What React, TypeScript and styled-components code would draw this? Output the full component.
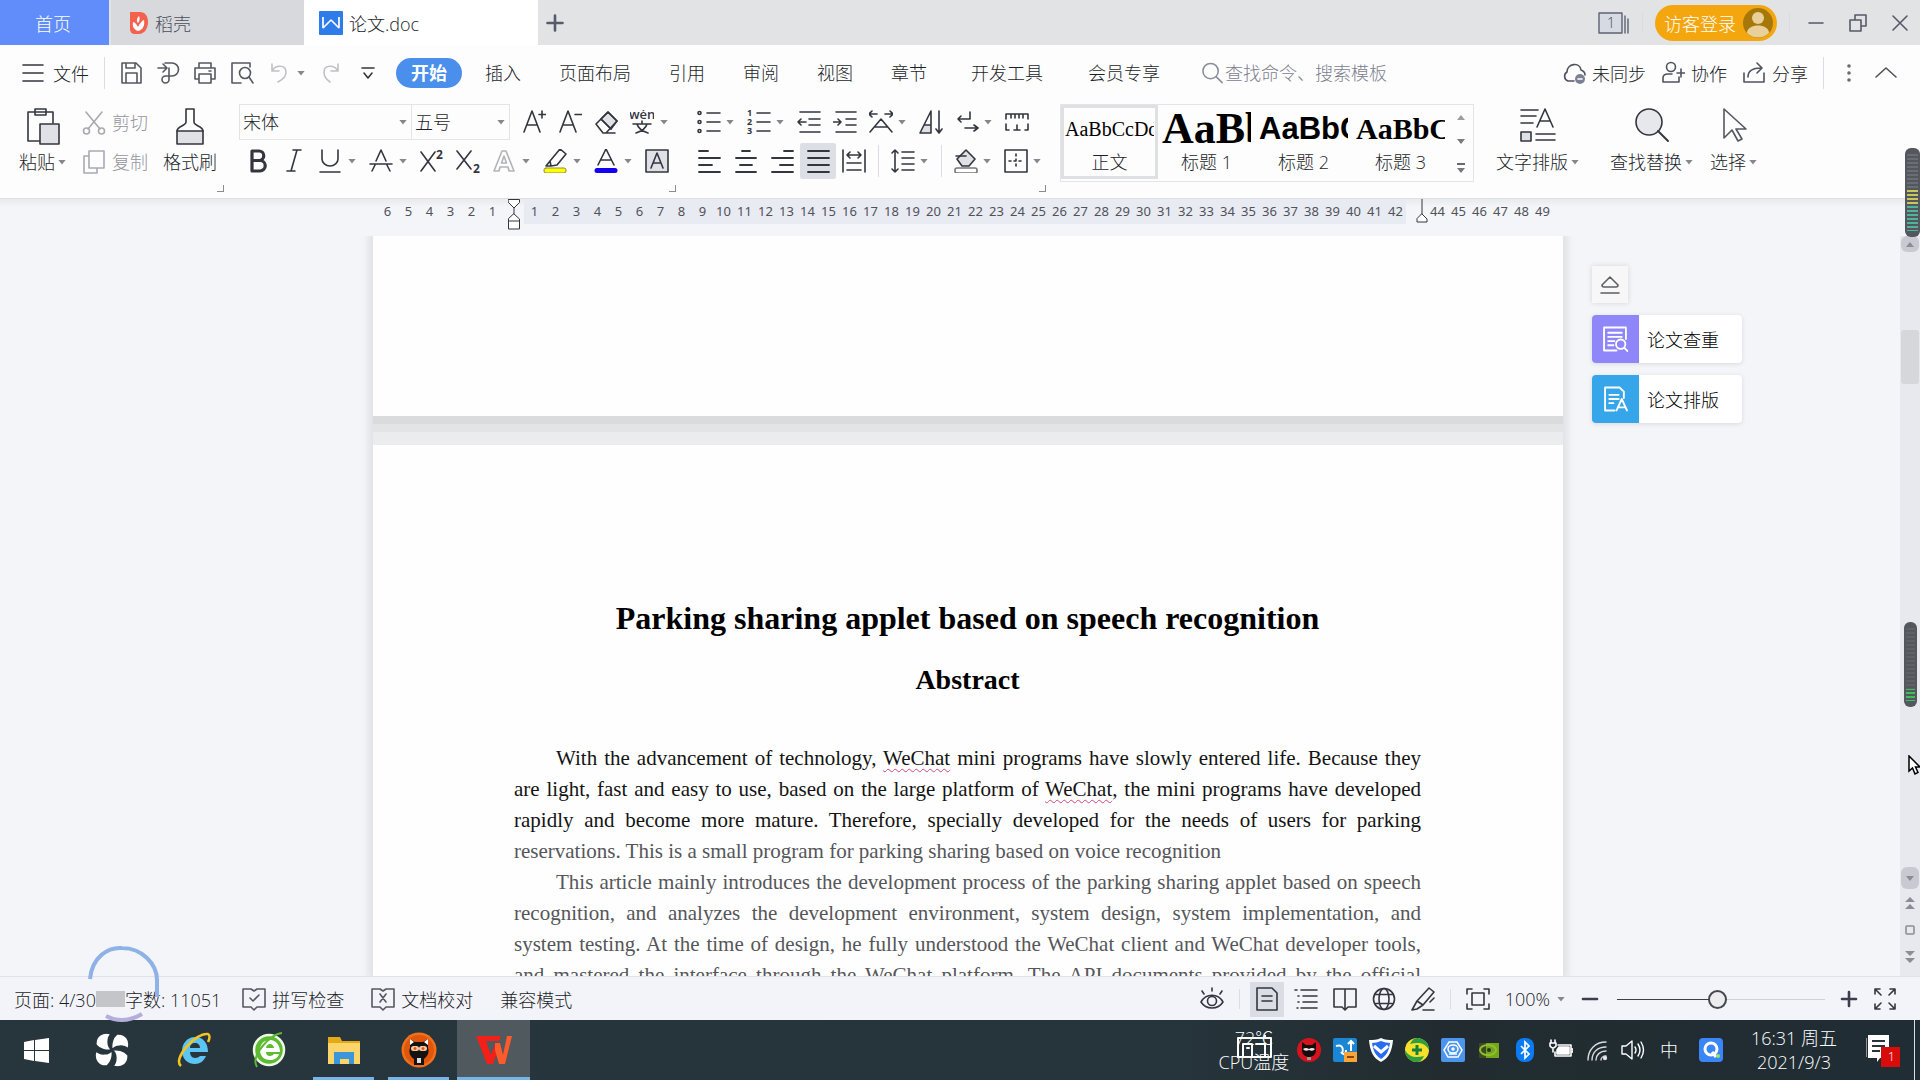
import React from "react";
import styled, { createGlobalStyle, css } from "styled-components";

const Global = createGlobalStyle`
  * { box-sizing: border-box; }
  body { margin: 0; font-family: "Open Sans", "Noto Sans CJK SC", sans-serif; font-size: 18px; font-weight: 300; color: #1c1e28; }
  button, input, select { font: inherit; color: inherit; border: 0; background: none; padding: 0; margin: 0; outline: none; }
  button { white-space: nowrap; }
  svg { display: block; flex: none; }
`;

const Shell = styled.div`
  display: flex;
  flex-direction: column;
  height: 100vh;
  overflow: hidden;
  background: #f3f5f8;
`;

/* ---------- shared ---------- */
const Row = styled.div<{ $gap?: number }>`
  display: flex;
  align-items: center;
  gap: ${(p) => p.$gap ?? 12}px;
`;
const Divider = styled.span<{ $h?: number }>`
  flex: none;
  width: 1px;
  height: ${(p) => p.$h ?? 32}px;
  background: #dcdde2;
`;
const CaretMark = styled.span`
  flex: none;
  width: 10px;
  height: 5px;
  background: #85878d;
  clip-path: polygon(10% 0, 90% 0, 50% 100%);
`;

type IconProps = { size?: number; w?: number; h?: number; box?: string; sw?: number; color?: string; children: React.ReactNode };
const Icon = ({ size = 24, w, h, box = "0 0 24 24", sw = 1.6, color = "#34363f", children }: IconProps) => (
  <svg width={w ?? size} height={h ?? size} viewBox={box} fill="none" stroke={color} strokeWidth={sw} strokeLinecap="round" strokeLinejoin="round" aria-hidden="true">
    {children}
  </svg>
);

/* ---------- title bar ---------- */
const TitleBar = styled.header`
  display: flex;
  align-items: stretch;
  height: 45px;
  flex: none;
  background: #e2e3e5;
`;
const HomeTab = styled.button`
  width: 109px;
  padding-right: 3px;
  background: #608dfa;
  color: #fff;
`;
const FileTab = styled.button<{ $active?: boolean }>`
  display: flex;
  align-items: center;
  gap: 6px;
  width: ${(p) => (p.$active ? 234 : 193)}px;
  margin-left: ${(p) => (p.$active ? 0 : 2)}px;
  padding-left: ${(p) => (p.$active ? 15 : 18)}px;
  background: ${(p) => (p.$active ? "#fff" : "#d8d9dc")};
  color: ${(p) => (p.$active ? "#22242c" : "#4c4f5c")};
`;
const NewTab = styled.button`
  width: 34px;
  display: grid;
  place-items: center;
`;
const WindowSide = styled.div`
  display: flex;
  align-items: center;
  gap: 12px;
  margin-left: auto;
  padding-right: 11px;
`;
const Login = styled.button`
  display: flex;
  align-items: center;
  gap: 7px;
  height: 36px;
  padding: 0 4px 0 9px;
  border-radius: 18px;
  background: #f4a60f;
  color: #fff;
`;
const WinButtons = styled.div`
  display: flex;
  gap: 24px;
  margin-left: 5px;
`;

/* ---------- menu row ---------- */
const MenuBar = styled.nav`
  display: flex;
  align-items: center;
  height: 56px;
  flex: none;
  padding: 0 22px;
  background: #fdfdfe;
`;
const FileButton = styled.button`
  display: flex;
  align-items: center;
  gap: 9px;
  margin-right: 15px;
`;
const QuickTools = styled.div`
  display: flex;
  align-items: center;
  gap: 13px;
  margin: 0 14px;
`;
const Tabs = styled.div`
  display: flex;
  align-items: center;
  gap: 38px;
  margin-left: 17px;
`;
const WideTabs = styled(Tabs)`
  gap: 45px;
  margin-left: 44px;
`;
const Tab = styled.button<{ $on?: boolean }>`
  line-height: 30px;
  ${(p) => p.$on && css`
    margin: 0 -15px;
    padding: 0 15px;
    border-radius: 15px;
    background: #4a8fec;
    color: #fff;
    font-weight: 700;
  `}
`;
const Search = styled.label`
  display: flex;
  align-items: center;
  gap: 1px;
  margin-left: 41px;
  input { width: 176px; color: #7c7f8e; }
  input::placeholder { color: #7c7f8e; opacity: 1; }
`;
const MenuSide = styled.div`
  display: flex;
  align-items: center;
  gap: 15px;
  margin-left: auto;
`;
const SideAction = styled.button`
  display: flex;
  align-items: center;
  gap: 6px;
`;

/* ---------- ribbon ---------- */
const Ribbon = styled.section`
  display: flex;
  align-items: flex-start;
  height: 98px;
  flex: none;
  padding: 3px 0 0 19px;
  background: #fdfdfe;
  border-bottom: 1px solid #dfe0e3;
`;
const BigButton = styled.button`
  display: flex;
  flex-direction: column;
  align-items: center;
  gap: 3px;
  padding-top: 3px;
`;
const BigLabel = styled.span`
  display: flex;
  align-items: center;
  gap: 2px;
  line-height: 28px;
`;
const ClipColumn = styled.div`
  display: flex;
  flex-direction: column;
  gap: 11px;
  margin: 5px 15px 0 15px;
`;
const ClipButton = styled.button`
  display: flex;
  align-items: center;
  gap: 6px;
  line-height: 28px;
  color: #95969e;
`;
const Corner = styled.span<{ $pull?: number }>`
  align-self: flex-end;
  width: 7px;
  height: 7px;
  margin: 0 0 6px -${(p) => p.$pull ?? 0}px;
  border: solid #8a8c92;
  border-width: 0 1px 1px 0;
`;
const ToolGroup = styled.div<{ $left?: number }>`
  display: flex;
  flex-direction: column;
  gap: 3px;
  margin-left: ${(p) => p.$left ?? 0}px;
`;
const ToolRow = styled(Row)<{ $pad?: number; $caretGap?: number }>`
  height: 36px;
  padding-left: ${(p) => p.$pad ?? 0}px;
  & > button { gap: ${(p) => p.$caretGap ?? 5}px; }
`;
const Combo = styled.label<{ $w: number }>`
  display: flex;
  align-items: center;
  width: ${(p) => p.$w}px;
  height: 36px;
  padding: 0 3px 0 3px;
  border: 1px solid #e3e4e7;
  border-right-width: 0;
  &:last-of-type { border-right-width: 1px; }
  select { appearance: none; flex: 1; min-width: 0; }
`;
const ToolButton = styled.button<{ $on?: boolean }>`
  display: flex;
  align-items: center;
  gap: 5px;
  height: 36px;
  ${(p) => p.$on && css`
    margin: 0 -6px;
    padding: 0 6px;
    background: #dce0e6;
    border-radius: 2px;
  `}
`;
const Styles = styled.div`
  display: flex;
  height: 78px;
  margin-left: 14px;
  border: 1px solid #e3e4e7;
`;
const StyleCard = styled.button<{ $on?: boolean }>`
  display: flex;
  flex-direction: column;
  width: 97px;
  height: 74px;
  padding: 0 1px;
  overflow: hidden;
  border: 3px solid ${(p) => (p.$on ? "#dfe0e3" : "transparent")};
`;
const Sample = styled.span<{ $size: number; $bold?: boolean; $sans?: boolean }>`
  height: 42px;
  width: 100%;
  overflow: hidden;
  text-align: left;
  line-height: 42px;
  color: #000;
  font-family: ${(p) => (p.$sans ? '"Liberation Sans", sans-serif' : '"Liberation Serif", serif')};
  font-size: ${(p) => p.$size}px;
  font-weight: ${(p) => (p.$bold ? 700 : 400)};
`;
const StyleName = styled.span`
  width: 100%;
  text-align: center;
  line-height: 25px;
`;
const StyleScroll = styled.div`
  display: flex;
  flex-direction: column;
  align-items: center;
  justify-content: space-between;
  width: 24px;
  padding: 9px 0 8px;
`;
const BigTools = styled.div`
  display: flex;
  gap: 30px;
  margin-left: 22px;
`;
const BigPair = styled(BigTools)`
  gap: 16px;
  margin-left: 0;
`;

/* ---------- ruler ---------- */
const Ruler = styled.div`
  display: flex;
  flex: none;
  height: 37px;
  padding-left: 10px;
  justify-content: center;
  background: linear-gradient(#e9eaec, #f3f5f8 8px);
  font-family: "Noto Sans", sans-serif;
  font-size: 13px;
  font-weight: 400;
  line-height: 24px;
  color: #50525a;
`;
const Tick = styled.span<{ $in?: boolean }>`
  display: flex;
  justify-content: center;
  flex: none;
  width: 21px;
  height: 25px;
  background: ${(p) => (p.$in ? "#e9ebf2" : "transparent")};
`;

/* ---------- document ---------- */
const Workspace = styled.main`
  display: flex;
  flex: 1;
  min-height: 0;
`;
const Canvas = styled.div`
  display: grid;
  grid-template-columns: 1fr 1190px 1fr;
  flex: 1;
  min-width: 0;
  padding-left: 36px;
  overflow: hidden;
`;
const Pages = styled.div`
  grid-column: 2;
  display: flex;
  flex-direction: column;
  gap: 29px;
  background: linear-gradient(#dadbdd 0 188px, #e3e4e6 188px 196px, #ebecee 196px);
  box-shadow: 0 0 8px 4px #dedfe2;
  min-height: 0;
`;
const PreviousPage = styled.div`
  flex: none;
  height: 180px;
  background: #fefefe;
`;
const Page = styled.article`
  flex: 1 0 auto;
  padding: 150px 142px 0 141px;
  background: #fefefe;
  font-family: "Liberation Serif", serif;
  font-weight: 400;
  color: #000;
`;
const Title = styled.h1`
  margin: 0;
  text-align: center;
  font-size: 32px;
  line-height: 46px;
`;
const Subtitle = styled.h2`
  margin: 16px 0 40px;
  text-align: center;
  font-size: 28px;
  line-height: 46px;
`;
const Para = styled.p`
  margin: 0;
  font-size: 21px;
  line-height: 31px;
`;
const Line = styled.span<{ $indent?: boolean; $last?: boolean; $faint?: boolean }>`
  display: block;
  padding-left: ${(p) => (p.$indent ? 42 : 0)}px;
  text-align: justify;
  text-align-last: ${(p) => (p.$last ? "left" : "justify")};
  color: ${(p) => (p.$faint ? "#55565a" : "#141414")};
`;
const Misspelt = styled.span`
  text-decoration: underline wavy #d0487c 1px;
  text-underline-offset: 3px;
`;
const SideTools = styled.aside`
  display: flex;
  flex-direction: column;
  align-items: flex-start;
  gap: 12px;
  padding: 30px 0 0 29px;
  z-index: 1;
`;
const Collapse = styled.button`
  display: grid;
  place-items: center;
  width: 36px;
  height: 37px;
  background: #f7f7f8;
  box-shadow: 0 0 5px #d4d5d8;
`;
const SideCard = styled.button<{ $tint: string }>`
  display: flex;
  align-items: center;
  width: 150px;
  height: 48px;
  gap: 8px;
  border-radius: 4px;
  overflow: hidden;
  background: #fff;
  color: #000;
  box-shadow: 0 1px 4px #d8d9dd;
  svg { width: 47px; height: 48px; padding: 11px; background: ${(p) => p.$tint}; }
`;
const ScrollBar = styled.div`
  display: flex;
  flex-direction: column;
  align-items: center;
  flex: none;
  width: 20px;
  padding-bottom: 6px;
  background: #e8e9ef;
`;
const ScrollButton = styled.button<{ $h: number }>`
  display: grid;
  place-items: center;
  width: 18px;
  height: ${(p) => p.$h}px;
  border-radius: 6px;
  background: #c8c9d1;
`;
const Thumb = styled.div`
  width: 18px;
  height: 54px;
  margin: 78px 0 auto;
  border-radius: 3px;
  background: #d6d7db;
`;
const ScrollStep = styled.button`
  display: grid;
  place-items: center;
  width: 20px;
  height: 27px;
`;
/* desktop overlays float above the window */
const Meter = styled.div<{ $top: number; $h: number; $w: number; $right: number; $on: string }>`
  position: fixed;
  top: ${(p) => p.$top}px;
  right: ${(p) => p.$right}px;
  width: ${(p) => p.$w}px;
  height: ${(p) => p.$h}px;
  padding: 6px 2px;
  border-radius: 6px;
  background: #55575f;
  z-index: 2;
  &::after {
    content: "";
    display: block;
    height: 100%;
    background: ${(p) => p.$on};
    -webkit-mask: repeating-linear-gradient(#000 0 2px, transparent 2px 4px);
  }
`;
const Pointer = styled.div`
  position: fixed;
  top: 755px;
  right: -4px;
  z-index: 2;
`;
const Spinner = styled.div`
  position: absolute;
  left: 86px;
  bottom: -3px;
  pointer-events: none;
`;

/* ---------- status bar ---------- */
const StatusBar = styled.footer`
  position: relative;
  display: flex;
  align-items: center;
  justify-content: space-between;
  flex: none;
  height: 44px;
  padding: 1px 23px 0 14px;
  background: #f3f4f9;
  border-top: 1px solid #e2e3e7;
  white-space: nowrap;
`;
const StatusItem = styled.button`
  display: flex;
  align-items: center;
  gap: 6px;
`;
const StatusLinks = styled.div`
  display: flex;
  align-items: center;
  gap: 27px;
  margin-left: 21px;
`;
const Smudge = styled.span`
  width: 29px;
  height: 16px;
  background: #c4c5c8;
`;
const ViewButton = styled.button<{ $on?: boolean }>`
  display: grid;
  place-items: center;
  width: 34px;
  height: 35px;
  margin: 0 -5px;
  background: ${(p) => (p.$on ? "#dadde4" : "transparent")};
`;
const Slider = styled.input`
  && { margin: 0 0 0 3px; }
  appearance: none;
  width: 208px;
  height: 20px;
  background: linear-gradient(90deg, #3c3e48 48%, #d0d1d6 48%) center / 100% 1px no-repeat;
  &::-webkit-slider-thumb {
    appearance: none;
    width: 19px;
    height: 19px;
    border: 2px solid #45474f;
    border-radius: 50%;
    background: #ececee;
  }
`;

/* ---------- taskbar ---------- */
const TaskBar = styled.div`
  display: flex;
  align-items: stretch;
  justify-content: space-between;
  flex: none;
  height: 60px;
  background: linear-gradient(90deg, #27363d, #26353c 60%, #222c30 75%, #202d34);
  color: #fff;
`;
const Launchers = styled.div`
  display: flex;
  gap: 2px;
`;
const Launcher = styled.button<{ $on?: boolean; $bar?: number; $gap?: number }>`
  display: flex;
  align-items: center;
  justify-content: center;
  width: 73px;
  margin-left: ${(p) => p.$gap ?? 0}px;
  background: linear-gradient(#76b5e6, #76b5e6) center bottom / ${(p) => p.$bar ?? 0}px 3px no-repeat ${(p) => (p.$on ? "#50595d" : "transparent")};
`;
const Tray = styled.div`
  display: flex;
  align-items: center;
  gap: 12px;
  padding-right: 5px;
`;
const Temp = styled.div`
  position: relative;
  width: 72px;
  margin-right: -5px;
  text-align: center;
  line-height: 24px;
  white-space: nowrap;
  svg { position: absolute; left: 18px; top: 9px; }
`;
const Clock = styled.div`
  margin: 0 17px 0 16px;
  text-align: center;
  line-height: 24px;
  white-space: nowrap;
`;
const Ime = styled.span`
  width: 24px;
  margin-right: 6px;
  text-align: center;
  line-height: 24px;
`;

const Caret = () => <CaretMark aria-hidden="true" />;
const Tool = ({ label, caret, on, children }: { label: string; caret?: boolean; on?: boolean; children: React.ReactNode }) => (
  <ToolButton aria-label={label} title={label} $on={on}>
    <Icon>{children}</Icon>
    {caret && <Caret />}
  </ToolButton>
);
const Lines = ({ rows }: { rows: [number, number][] }) => (
  <>{rows.map(([a, b], i) => <path key={i} d={`M${a} ${2 + i * 7}H${b}`} strokeWidth="1.8" />)}</>
);
const Digit = ({ x, y, s = 9, children }: { x: number; y: number; s?: number; children: string }) => (
  <text x={x} y={y} fontSize={s} fontWeight="700" fill="#34363f" stroke="none">{children}</text>
);

const TitleRow = () => (
  <TitleBar>
    <HomeTab>首页</HomeTab>
    <FileTab>
      <svg width="20" height="22" viewBox="0 0 20 22">
        <path d="M1 0h10c5 0 8 4 8 10 0 7-4 12-9 12H6c-3 0-5-2-5-5z" fill="#f4614f" />
        <path d="M9 19C5 18 3 14 4 10c2 0 4 3 5 5zM9 19c5-1 7-6 6-11-3 1-5 5-6 7zM9 11C7 9 8 6 10 4c1 2 1 5-1 7z" fill="#fff" />
      </svg>
      稻壳
    </FileTab>
    <FileTab $active>
      <svg width="24" height="24" viewBox="0 0 24 24">
        <rect width="24" height="24" rx="1" fill="#2e7bea" />
        <path d="M4 6v11l8-8 8 8V6" fill="none" stroke="#fff" strokeWidth="1.7" strokeLinejoin="bevel" />
      </svg>
      论文.doc
    </FileTab>
    <NewTab aria-label="新建"><Icon size={18} box="0 0 18 18" sw={2.6} color="#555a6c"><path d="M9 1.5v15M1.5 9h15" /></Icon></NewTab>
    <WindowSide>
      <button aria-label="窗口">
        <Icon w={32} h={22} box="0 0 32 22" sw={1.4} color="#5d6374">
          <rect x="1" y="1" width="23" height="20" fill="#d5dae3" /><path d="M27 4v17M30 7v14" />
          <text x="9" y="16" fontSize="14" fill="#454a5a" stroke="none">1</text>
        </Icon>
      </button>
      <Divider $h={22} />
      <Login>
        访客登录
        <svg width="30" height="30" viewBox="0 0 30 30">
          <circle cx="15" cy="15" r="15" fill="#a67709" />
          <circle cx="15" cy="10" r="6" fill="#e9cf9a" />
          <path d="M4 25c0-10 22-10 22 0-6 6-16 6-22 0" fill="#e9cf9a" />
        </svg>
      </Login>
      <Divider $h={22} />
      <WinButtons>
        <button aria-label="最小化"><Icon w={18} h={18} box="0 0 18 18" color="#555a68"><path d="M2 9h14" /></Icon></button>
        <button aria-label="还原"><Icon w={18} h={18} box="0 0 18 18" color="#555a68"><path d="M1 6h11v11H1zM6 6V1h11v11h-5" /></Icon></button>
        <button aria-label="关闭"><Icon w={18} h={18} box="0 0 18 18" color="#555a68"><path d="M2 2l14 14M16 2L2 16" /></Icon></button>
      </WinButtons>
    </WindowSide>
  </TitleBar>
);

const MenuRow = () => (
  <MenuBar>
    <FileButton>
      <Icon w={22} h={18} box="0 0 22 18"><path d="M1 1h20M1 9h20M1 17h20" /></Icon>
      文件
    </FileButton>
    <Divider />
    <QuickTools>
      <button aria-label="保存"><Icon color="#555761"><path d="M3 2h14l5 5v15H3zM7 22V12h11v10M7 2v5h9V2" /></Icon></button>
      <button aria-label="输出"><Icon color="#555761"><path d="M2 7h9M7 3l4 4-4 4M9 2h7a6.500 6.500 0 0 1 0 13h-6.500a3.500 3.500 0 1 0 3.500 3.500V7" /></Icon></button>
      <button aria-label="打印"><Icon color="#555761"><path d="M6 7V2h12v5M6 18H2V7h20v11h-4M6 13h12v9H6zM16 10h2" /></Icon></button>
      <button aria-label="打印预览"><Icon color="#555761"><path d="M11 22H2V2h18v4" /><circle cx="15" cy="12" r="5.5" /><path d="M19 16l4 6" /></Icon></button>
      <ToolButton aria-label="撤销"><Icon color="#c0c1c6"><path d="M5 3v7h7M5 10c3-6 14-7 14 1 0 5-4 8-8 10" /></Icon><Caret /></ToolButton>
      <button aria-label="恢复"><Icon color="#c0c1c6"><path d="M19 3v7h-7M19 10C16 4 5 3 5 11c0 5 3 8 6 10" /></Icon></button>
      <button aria-label="更多"><Icon><path d="M6 7h12M8 12l4 5 4-5" /></Icon></button>
    </QuickTools>
    <Tabs>
      <Tab $on>开始</Tab><Tab>插入</Tab><Tab>页面布局</Tab><Tab>引用</Tab><Tab>审阅</Tab><Tab>视图</Tab><Tab>章节</Tab>
    </Tabs>
    <WideTabs><Tab>开发工具</Tab><Tab>会员专享</Tab></WideTabs>
    <Search>
      <Icon color="#8a8d9a" w={23} h={24}><circle cx="10" cy="10" r="8" /><path d="M16 16l6 6" /></Icon>
      <input aria-label="查找" placeholder="查找命令、搜索模板" />
    </Search>
    <MenuSide>
      <SideAction>
        <Icon color="#50525d"><path d="M12 20H6a5 5 0 0 1-1-9c0-9 13-10 14-2 3 1 4 3 4 5" /><circle cx="18" cy="18" r="5" fill="#7d8094" stroke="none" /><path d="M16 18h4" stroke="#fff" /></Icon>
        未同步
      </SideAction>
      <SideAction>
        <Icon color="#50525d"><circle cx="10" cy="6" r="4.5" /><path d="M18 16v5H2v-4c0-3 2-4 5-4h4M20 8v8M16 12h8" /></Icon>
        协作
      </SideAction>
      <SideAction>
        <Icon color="#50525d"><path d="M2 12v9h20v-9M6 16c0-6 5-9 13-9M15 2l5 5-5 5" /></Icon>
        分享
      </SideAction>
      <Divider />
      <button aria-label="菜单"><Icon size={20} box="0 0 20 20" color="#6a6c74"><g fill="#6a6c74" stroke="none"><circle cx="10" cy="3" r="1.8" /><circle cx="10" cy="10" r="1.8" /><circle cx="10" cy="17" r="1.8" /></g></Icon></button>
      <button aria-label="折叠"><Icon color="#50525d"><path d="M2 16L12 7l10 9" /></Icon></button>
    </MenuSide>
  </MenuBar>
);

const RibbonRow = () => (
  <Ribbon>
    <BigButton>
      <Icon w={34} h={38} box="0 0 34 38"><path d="M14 34H2V5h25v11M9 2h11v6H9z" /><rect x="14" y="17" width="19" height="20" fill="#dfe1e6" /></Icon>
      <BigLabel>粘贴 <Caret /></BigLabel>
    </BigButton>
    <ClipColumn>
      <ClipButton><Icon color="#a9aab0"><path d="M4 1l14 17M20 1L6 18" /><circle cx="4.5" cy="20" r="3" /><circle cx="19.5" cy="20" r="3" /></Icon>剪切</ClipButton>
      <ClipButton><Icon color="#a9aab0"><path d="M7 1h15v17H7zM7 6H2v17h13v-5" /></Icon>复制</ClipButton>
    </ClipColumn>
    <BigButton>
      <Icon w={34} h={38} box="0 0 34 38"><path d="M4 24h26v13H4z" fill="#dfe1e6" /><path d="M4 24c0-5 9-5 9-9V2h8v13c0 4 9 4 9 9" /></Icon>
      <BigLabel>格式刷</BigLabel>
    </BigButton>
    <Corner />
    <ToolGroup $left={15}>
      <ToolRow>
        <Row $gap={0}>
          <Combo $w={172}><select aria-label="字体"><option>宋体</option></select><Caret /></Combo>
          <Combo $w={99}><select aria-label="字号"><option>五号</option></select><Caret /></Combo>
        </Row>
        <Tool label="增大字号"><path d="M2 22L10 1l8 21M5 15h10M20 1v7M17 4.500h7" /></Tool>
        <Tool label="减小字号"><path d="M2 22L10 1l8 21M5 15h10M17 4.500h7" /></Tool>
        <Tool label="清除格式"><path d="M7 9l7-7 9 9-6 8z" fill="#dfe1e6" /><path d="M2 14L14 2l9 9-11 12H9zM10 23h11M7 9l10 10" /></Tool>
        <Tool label="拼音指南" caret><text x="-1" y="9" fontSize="13" fontWeight="600" fill="#34363f" stroke="none">wén</text><path d="M3 14h18M12 11v3M7 14c1 4 5 7 11 9M17 14c-1 4-5 7-11 9" /></Tool>
      </ToolRow>
      <ToolRow $pad={7}>
        <Tool label="加粗"><path d="M6 2h7a4.500 4.500 0 0 1 0 9.500H6zM6 11.500h8a5 5 0 0 1 0 10.500H6z" strokeWidth="3.2" /></Tool>
        <Tool label="倾斜"><path d="M11 1h8M5 22h8M15 1L9 22" /></Tool>
        <Tool label="下划线" caret><path d="M4 1v9a8 7 0 0 0 16 0V1M2 23h20" /></Tool>
        <Tool label="删除线" caret><path d="M7 12l5-11 5 11M1 15h22M6 16l-3 6M18 16l3 6" /></Tool>
        <Tool label="上标"><path d="M1 3l14 19M15 3L1 22" /><Digit x={16} y={10} s={12}>2</Digit></Tool>
        <Tool label="下标"><path d="M1 2l14 18M15 2L1 20" /><Digit x={17} y={24} s={12}>2</Digit></Tool>
        <Tool label="文字效果" caret><path d="M2 22L10 2h4l8 20h-5l-1-4H8l-1 4zM9.500 14h5L12 7z" stroke="#b3b4b9" /></Tool>
        <Tool label="突出显示" caret><path d="M7 12L17 0l6 5-9 11-6 1zM7 12l-4 5h5" /><rect x="1" y="19" width="22" height="5" rx="2" fill="#ff0" stroke="#8b8b40" strokeWidth="1" /></Tool>
        <Tool label="字体颜色" caret><path d="M4 16l8-16 8 16M7 11h10" /><path d="M3 21.500h18" stroke="#1200ee" strokeWidth="5" /></Tool>
        <Tool label="字符底纹"><rect x="1" y="1" width="22" height="22" fill="#dfe1e6" /><path d="M6 19l6-15 6 15M8 14h8" /></Tool>
      </ToolRow>
    </ToolGroup>
    <Corner />
    <ToolGroup $left={21}>
      <ToolRow $caretGap={4}>
        <Tool label="项目符号" caret><circle cx="2.5" cy="3" r="1.5" /><circle cx="2.5" cy="12" r="1.5" /><circle cx="2.5" cy="21" r="1.5" /><path d="M10 3h13M10 12h13M10 21h13" /></Tool>
        <Tool label="编号" caret><Digit x={0} y={6}>1</Digit><Digit x={0} y={15}>2</Digit><Digit x={0} y={24}>3</Digit><path d="M10 3h13M10 12h13M10 21h13" /></Tool>
        <Tool label="减少缩进"><path d="M3 2h20M12 9h11M12 15h11M3 22h20M1 12h8M4 9l-3 3 3 3" /></Tool>
        <Tool label="增加缩进"><path d="M3 2h20M13 9h10M13 15h10M3 22h20M0 12h8M5 9l3 3-3 3" /></Tool>
        <Tool label="中文版式" caret><path d="M1 22L12 9l11 13M6 17h12M0 4h8M3 1L0 4l3 3M16 4h8M21 1l3 3-3 3" /></Tool>
        <Tool label="排序"><path d="M5 15h7v8H1z" fill="#dfe1e6" stroke="none" /><path d="M1 23L12 1v22zM5 15h7" /><path d="M20 1v21M17 19l3 4 3-4" /></Tool>
        <Tool label="段落标记" caret><path d="M15 2v7H3M6 6L3 9l3 3M10 18h13M19 15l4 3-4 3" /></Tool>
        <Tool label="标尺"><path d="M1 9V4h22v5M6 4v4M10 4v4M14 4v4M18 4v4M1 14v6h3M12 15v5M9 20h6M23 14v6h-3" /></Tool>
      </ToolRow>
      <ToolRow $pad={1} $caretGap={4}>
        <Tool label="左对齐"><Lines rows={[[1, 10], [1, 22], [1, 14], [1, 22]]} /></Tool>
        <Tool label="居中"><Lines rows={[[8, 16], [2, 22], [6, 18], [2, 22]]} /></Tool>
        <Tool label="右对齐"><Lines rows={[[14, 23], [2, 23], [10, 23], [2, 23]]} /></Tool>
        <Tool label="两端对齐" on><Lines rows={[[2, 23], [2, 23], [2, 23], [2, 23]]} /></Tool>
        <Tool label="分散对齐"><path d="M1 1v22M23 1v22M5 14h14M5 21h14M5 6h14M8 3L5 6l3 3M16 3l3 3-3 3" /></Tool>
        <Divider />
        <Tool label="行距" caret><path d="M4 1v22M1 4l3-3 3 3M1 20l3 3 3-3M11 3h12M11 9h12M11 15h12M11 21h12" /></Tool>
        <Divider />
        <Tool label="底纹" caret><path d="M3 10l9-9 9 9-6 7H8z" fill="#dfe1e6" /><path d="M2 7h10" /><rect x="1" y="19" width="22" height="5" rx="2" fill="#fff" stroke="#777" /></Tool>
        <Tool label="边框" caret><path d="M1 1h22v22H1z" /><path d="M12 5v14M5 12h14" strokeDasharray="2 3" /></Tool>
      </ToolRow>
    </ToolGroup>
    <Corner $pull={3} />
    <Styles>
      <StyleCard $on><Sample $size={20}>AaBbCcDd</Sample><StyleName>正文</StyleName></StyleCard>
      <StyleCard><Sample $size={44} $bold>AaBb</Sample><StyleName>标题 1</StyleName></StyleCard>
      <StyleCard><Sample $size={31} $bold $sans>AaBbC</Sample><StyleName>标题 2</StyleName></StyleCard>
      <StyleCard><Sample $size={30} $bold>AaBbC</Sample><StyleName>标题 3</StyleName></StyleCard>
      <StyleScroll>
        <Icon w={8} h={6} box="0 0 8 6"><path d="M0 6l4-5 4 5z" fill="#9b9da3" stroke="none" /></Icon>
        <Icon w={8} h={6} box="0 0 8 6"><path d="M0 0l4 5 4-5z" fill="#777980" stroke="none" /></Icon>
        <Icon w={8} h={10} box="0 0 8 10"><path d="M0 5l4 5 4-5z" fill="#777980" stroke="none" /><path d="M0 1h8" /></Icon>
      </StyleScroll>
    </Styles>
    <BigTools>
      <BigButton>
        <Icon w={36} h={38} box="0 0 36 38"><path d="M1 3h17M1 9h15M1 16h12M17 20l8-18 8 18M20 14h10M16 27h19M16 33h19" /><path d="M1 25h10v9H1z" fill="#dfe1e6" /></Icon>
        <BigLabel>文字排版 <Caret /></BigLabel>
      </BigButton>
      <BigPair>
        <BigButton>
          <Icon w={36} h={38} box="0 0 36 38"><circle cx="15" cy="15" r="13" fill="#e7e8eb" /><path d="M24 24l10 10" strokeWidth="2" /></Icon>
          <BigLabel>查找替换 <Caret /></BigLabel>
        </BigButton>
        <BigButton>
          <Icon w={30} h={38} box="0 0 30 38" color="#555761"><path d="M5 2v29l8-8 6 11 4-2-6-10h10z" /></Icon>
          <BigLabel>选择 <Caret /></BigLabel>
        </BigButton>
      </BigPair>
    </BigTools>
  </Ribbon>
);

const RulerRow = () => (
  <Ruler>
    {[6, 5, 4, 3, 2, 1].map((n) => <Tick key={n}>{n}</Tick>)}
    <Tick>
      <Icon w={12} h={31} box="0 0 12 31" sw={1}><path d="M.5.5h11v3L6 9 .5 3.500zM6 9v6M6 15l5.500 5v10H.5V20zM.5 22h11" fill="#fff" /></Icon>
    </Tick>
    {Array.from({ length: 49 }, (_, i) => i + 1).map((n) => (
      <Tick key={n} $in={n < 43}>
        {n === 43 ? <Icon w={30} h={24} box="0 0 30 24" sw={1}><path d="M20 0v15M20 15l5 5v3H15v-3z" fill="#fff" /></Icon> : n}
      </Tick>
    ))}
  </Ruler>
);

const Doc = () => (
  <Page>
    <Title>Parking sharing applet based on speech recognition</Title>
    <Subtitle>Abstract</Subtitle>
    <Para>
      <Line $indent>With the advancement of technology, <Misspelt>WeChat</Misspelt> mini programs have slowly entered life. Because they</Line>
      <Line>are light, fast and easy to use, based on the large platform of <Misspelt>WeChat</Misspelt>, the mini programs have developed</Line>
      <Line>rapidly and become more mature. Therefore, specially developed for the needs of users for parking</Line>
      <Line $last $faint>reservations. This is a small program for parking sharing based on voice recognition</Line>
    </Para>
    <Para>
      <Line $indent $faint>This article mainly introduces the development process of the parking sharing applet based on speech</Line>
      <Line $faint>recognition, and analyzes the development environment, system design, system implementation, and</Line>
      <Line $faint>system testing. At the time of design, he fully understood the WeChat client and WeChat developer tools,</Line>
      <Line $faint>and mastered the interface through the WeChat platform. The API documents provided by the official</Line>
    </Para>
  </Page>
);

const Work = () => (
  <Workspace>
    <Canvas>
      <Pages><PreviousPage /><Doc /></Pages>
      <SideTools>
        <Collapse aria-label="收起"><Icon w={20} h={18} box="0 0 20 18" color="#5d5f66"><path d="M10 1l8 8q0 2-2 2H4q-2 0-2-2zM1 17h18" /></Icon></Collapse>
        <SideCard $tint="#8f86fa">
          <Icon color="#fff" sw={1.8}><path d="M13 23H1V1h21v11M5 6h13M5 10h13M5 14h6M5 18h5" /><circle cx="17" cy="17" r="4.5" /><path d="M20.500 20.500l3 3" /></Icon>
          论文查重
        </SideCard>
        <SideCard $tint="#36a5ea">
          <Icon color="#fff" sw={1.8}><path d="M11 23H2V1h14l4 4v6M6 8h9M6 12h9M6 16h4M13 23l5-11 5 11M15 20h6" /></Icon>
          论文排版
        </SideCard>
      </SideTools>
    </Canvas>
    <ScrollBar>
      <ScrollButton $h={16} aria-label="向上滚动"><Icon w={8} h={5} box="0 0 8 5"><path d="M0 5l4-5 4 5z" fill="#8b8d96" stroke="none" /></Icon></ScrollButton>
      <Thumb />
      <ScrollButton $h={22} aria-label="向下滚动"><Icon w={8} h={5} box="0 0 8 5"><path d="M0 0l4 5 4-5z" fill="#8b8d96" stroke="none" /></Icon></ScrollButton>
      <ScrollStep aria-label="上一页"><Icon w={10} h={12} box="0 0 10 12"><path d="M0 5l5-5 5 5zM0 12l5-5 5 5z" fill="#8b8d96" stroke="none" /></Icon></ScrollStep>
      <ScrollStep aria-label="选择浏览对象"><Icon w={10} h={10} box="0 0 10 10" color="#8b8d96"><rect x="1" y="1" width="8" height="8" rx="1" /></Icon></ScrollStep>
      <ScrollStep aria-label="下一页"><Icon w={10} h={12} box="0 0 10 12"><path d="M0 0l5 5 5-5zM0 7l5 5 5-5z" fill="#8b8d96" stroke="none" /></Icon></ScrollStep>
    </ScrollBar>
  </Workspace>
);

const Status = () => (
  <StatusBar>
    <Row $gap={0}>
      <StatusItem>页面: 4/30</StatusItem>
      <Smudge />
      <StatusItem>字数: 11051</StatusItem>
      <StatusLinks>
        <StatusItem><Icon color="#555761"><path d="M1 2h8l3 2 3-2h8v18h-8l-3 3-3-3H1zM8 11l3 3 6-6" /></Icon>拼写检查</StatusItem>
        <StatusItem><Icon color="#555761"><path d="M1 2h8l3 2 3-2h8v18h-8l-3 3-3-3H1zM9 7l6 8M15 7l-6 8" /></Icon>文档校对</StatusItem>
        <StatusItem>兼容模式</StatusItem>
      </StatusLinks>
    </Row>
    <Row $gap={15}>
      <ViewButton aria-label="护眼模式"><Icon><path d="M1 15c5-9 17-9 22 0-5 8-17 8-22 0zM12 1v3M2 4l2 3M22 4l-2 3" /><circle cx="12" cy="14" r="4.5" /></Icon></ViewButton>
      <Divider $h={20} />
      <ViewButton $on aria-label="页面视图"><Icon><path d="M2 1h15l5 5v17H2zM7 9h10M7 14h10" /></Icon></ViewButton>
      <ViewButton aria-label="大纲"><Icon><path d="M7 3h16M9 9h14M9 15h14M7 21h16M1 3h2M4 9h1M4 15h1M4 21h-1" /></Icon></ViewButton>
      <ViewButton aria-label="阅读版式"><Icon><path d="M1 2h22v18h-8l-3 3-3-3H1zM12 3v18" /></Icon></ViewButton>
      <ViewButton aria-label="Web版式"><Icon><circle cx="12" cy="12" r="10.5" /><ellipse cx="12" cy="12" rx="5" ry="10.5" /><path d="M3 7.500h18M3 16.500h18" /></Icon></ViewButton>
      <ViewButton aria-label="写作模式"><Icon><path d="M6 14L18 1l5 4-11 13zM6 14l-5 9 5-1 6-4M12 23h11M19 15l4-4" /></Icon></ViewButton>
      <Divider $h={20} />
      <ViewButton aria-label="最佳缩放"><Icon><path d="M1 7V2h5M18 2h5v5M23 17v5h-5M6 22H1v-5M6 6h12v12H6z" /></Icon></ViewButton>
      <StatusItem>100% <Caret /></StatusItem>
      <button aria-label="缩小"><Icon size={18} box="0 0 18 18" sw={2.6} color="#3c3e50"><path d="M2 9h14" /></Icon></button>
      <Slider type="range" aria-label="缩放" defaultValue={48} />
      <button aria-label="放大"><Icon size={18} box="0 0 18 18" sw={2.6} color="#3c3e50"><path d="M2 9h14M9 2v14" /></Icon></button>
      <button aria-label="全屏"><Icon><path d="M2 7V2h5M2 2l6 6M17 2h5v5M22 2l-6 6M22 17v5h-5M22 22l-6-6M7 22H2v-5M2 22l6-6" /></Icon></button>
    </Row>
    <Spinner>
      <svg width="76" height="80" viewBox="0 0 76 80" fill="none" strokeWidth="4">
        <path d="M4 36C6 14 22 4 36 5c20 0 35 16 35 32v17" stroke="#8fb2e6" />
        <path d="M20 73q17 9 36-2" stroke="#b3aedb" />
      </svg>
    </Spinner>
  </StatusBar>
);

const Task = () => (
  <TaskBar>
    <Launchers>
      <Launcher aria-label="开始菜单"><svg width="25" height="25" viewBox="0 0 25 25" fill="#fff"><path d="M0 4l10-2v10H0zM11 2l14-2v12H11zM0 13h10v10L0 21zM11 13h14v12l-14-2z" /></svg></Launcher>
      <Launcher aria-label="应用">
        <svg width="34" height="34" viewBox="0 0 34 34" fill="#fff" stroke="#27363d" strokeWidth="1.5">
          <path d="M17 17C12 14 12 5 16 1 8-2 0 3 1 12c4 5 11 6 16 5z" /><path d="M17 17c3-5 12-5 16-1 3-8-2-16-11-15-5 4-6 11-5 16z" />
          <path d="M17 17c5 3 5 12 1 16 8 3 16-2 15-11-4-5-11-6-16-5z" /><path d="M17 17c-3 5-12 5-16 1-3 8 2 16 11 15 5-4 6-11 5-16z" />
        </svg>
      </Launcher>
      <Launcher aria-label="IE" $gap={7}>
        <svg width="36" height="36" viewBox="0 0 36 36" fill="none">
          <path d="M30 24c-2 5-6 8-11 8-8 0-13-6-13-13S11 5 19 5s13 6 13 15H14c0 3 2 6 5 6 2 0 4-1 5-2zM14 16h10c0-3-2-5-5-5s-5 2-5 5z" fill="#5cc5f4" />
          <path d="M5 34C-4 27 20 0 32 2c2 1 2 4 0 8" stroke="#f5c322" strokeWidth="2.5" />
        </svg>
      </Launcher>
      <Launcher aria-label="浏览器">
        <svg width="34" height="36" viewBox="0 0 34 36" fill="none">
          <circle cx="17" cy="18" r="15" fill="#5dbb31" stroke="#eef9e8" strokeWidth="2.5" />
          <path d="M27 22c-1 4-5 6-9 6-6 0-10-4-10-10S12 8 18 8s10 5 10 12H14c0 2 1 4 4 4 2 0 3-1 4-2zM14 16h8c0-2-2-4-4-4s-4 2-4 4z" fill="#fff" />
          <path d="M5 35C-2 24 18 2 30 1" stroke="#5dbb31" strokeWidth="2" />
        </svg>
      </Launcher>
      <Launcher aria-label="文件资源管理器" $bar={61}>
        <svg width="34" height="28" viewBox="0 0 34 28"><path d="M1 1h12l2 4h18v23H1z" fill="#e3a916" /><path d="M1 7h32v21H1z" fill="#fbd56c" /><path d="M7 28V16h20v12h-5v-5h-9v5z" fill="#3b97d8" /></svg>
      </Launcher>
      <Launcher aria-label="抢票助手" $bar={61}>
        <svg width="36" height="36" viewBox="0 0 36 36">
          <circle cx="18" cy="18" r="17.5" fill="#f0701b" /><circle cx="18" cy="18" r="15" fill="#e0560b" />
          <path d="M9 7l5 3h8l5-3v9c2 6-2 9-4 11v6H13v-6c-3-2-6-6-4-11z" fill="#161212" /><path d="M9 7l4 3-4 3zM27 7l-4 3 4 3z" fill="#fff" />
          <rect x="10" y="14" width="8" height="5" rx="2.5" fill="#f6c9a8" /><rect x="18" y="14" width="8" height="5" rx="2.5" fill="#f6c9a8" /><circle cx="14" cy="16.5" r="1.5" fill="#e0560b" /><circle cx="22" cy="16.5" r="1.5" fill="#e0560b" />
          <rect x="16" y="26" width="4" height="5" fill="#ddd" />
        </svg>
      </Launcher>
      <Launcher aria-label="WPS" $on $bar={73}>
        <svg width="36" height="28" viewBox="0 0 36 28"><path d="M0 0h25l-2 5H10l5 14 4-11h5l-7 20h-6L2 5z" fill="#f3201a" /><path d="M19 7h5l3 12L31 0h5l-7 28h-6l-4-14z" fill="#ff5a2c" /></svg>
      </Launcher>
    </Launchers>
    <Tray>
      <Temp>
        <Icon w={37} h={24} box="0 0 37 24" color="#fff" sw={2}><path d="M2 3h33v19H2zM7 9h9v13M7 9v13M20 9h9v13H18M29 3V0M11 13h2" /></Icon>
        72℃<br />CPU温度
      </Temp>
      <svg width="24" height="24" viewBox="0 0 24 24"><circle cx="12" cy="12" r="12" fill="#d6131c" /><path d="M5 4l4 3h6l4-3v8c0 5-4 7-7 7s-7-2-7-7z" fill="#140c0c" /><path d="M6 11q3-2 6 0 3-2 6 0-2 3-6 1-4 2-6-1z" fill="#f5e6e0" /><path d="M10 19h4v3h-4z" fill="#9a9a9a" /></svg>
      <svg width="24" height="24" viewBox="0 0 24 24"><rect width="24" height="24" rx="2" fill="#1b86d3" /><path d="M3 8c6-2 8 2 6 8M8 14c3 4 5 2 5-2M18 13V3M15 6l3-3 3 3" stroke="#fff" strokeWidth="2" fill="none" /><rect x="11" y="14" width="13" height="10" fill="#f7a43b" /><path d="M14 19h7" stroke="#8a4500" strokeWidth="2" /></svg>
      <svg width="24" height="24" viewBox="0 0 24 24"><path d="M12 0c4 2 8 2 12 2-1 11-4 18-12 22C4 20 1 13 0 2c4 0 8 0 12-2z" fill="#fff" /><path d="M12 3c3 1 6 2 9 2-1 8-4 13-9 16C7 18 4 13 3 5c3 0 6-1 9-2z" fill="#2a6cf0" /><path d="M5 8l7 6 7-6" stroke="#fff" strokeWidth="3" fill="none" /></svg>
      <svg width="24" height="24" viewBox="0 0 24 24"><circle cx="12" cy="12" r="12" fill="#f6e02c" /><path d="M12 0A12 12 0 0 1 24 12C20 4 12 4 5 6 7 2 9 0 12 0zM12 24A12 12 0 0 1 0 12c4 8 12 8 19 6-2 4-4 6-7 6z" fill="#2e9e3e" /><path d="M12 7v10M7 12h10" stroke="#15803a" strokeWidth="3" /></svg>
      <svg width="24" height="24" viewBox="0 0 24 24" fill="none" stroke="#fff" strokeWidth="1.5"><rect width="24" height="24" rx="2" fill="#4b95ef" stroke="none" /><path d="M8 4h8l5 8-4 7H7l-4-7z" /><ellipse cx="12" cy="11" rx="5" ry="4" /><circle cx="12" cy="11" r="1" /><path d="M8 16h8" /></svg>
      <svg width="24" height="24" viewBox="0 0 24 24"><path d="M2 5h20v15H2z" fill="#3c4a24" /><path d="M9 5h13v15H9z" fill="#74a51c" /><ellipse cx="11" cy="12" rx="8" ry="5" fill="none" stroke="#8fc02b" strokeWidth="2" /><circle cx="12" cy="12" r="2" fill="#27361a" /></svg>
      <svg width="24" height="24" viewBox="0 0 24 24"><rect x="3" y="0" width="18" height="24" rx="8" fill="#0a7cf2" /><path d="M8 8l8 8-4 4V4l4 4-8 8" stroke="#fff" strokeWidth="1.7" fill="none" /></svg>
      <Icon color="#fff"><path d="M9 7h13v11H6v-4M22 11h2v3h-2" /><path d="M10 9h10v7H8v-4z" fill="#fff" /><path d="M1 5h6v3q-3 4-6 0zM2 5V2M6 5V2M4 10v4" /></Icon>
      <Icon color="#d9dcde" sw={1.4}><path d="M3 22C3 12 10 4 21 4M7 22C7 14 13 9 21 9M11 22c0-5 4-9 10-9M16 22c0-2 2-4 5-4" /><circle cx="20" cy="20" r="1.5" fill="#fff" /></Icon>
      <Icon color="#fff" sw={1.4}><path d="M1 8h4l6-5v18l-6-5H1zM14 9q2 3 0 6M17 6q4 6 0 12M20 4q5 8 0 16" /></Icon>
      <Ime>中</Ime>
      <svg width="24" height="24" viewBox="0 0 24 24"><rect width="24" height="24" rx="4" fill="#3b86f7" /><circle cx="12" cy="11" r="6" fill="none" stroke="#fff" strokeWidth="3" /><path d="M13 14l4 5" stroke="#fff" strokeWidth="3" /><circle cx="19" cy="18" r="2" fill="#9be36a" /></svg>
      <Clock>16:31 周五<br />2021/9/3</Clock>
      <svg width="36" height="54" viewBox="0 0 36 54"><path d="M2 12h21v23h-9l-3 4v-4H2z" fill="#fff" /><path d="M6 18h13M6 23h13M6 28h8" stroke="#27363d" strokeWidth="2" /><path d="M0 15v19" stroke="#fff" /><rect x="15" y="24" width="19" height="20" fill="#d90c0c" /><text x="22" y="38" fontSize="12" fill="#fff">1</text></svg>
      <Divider $h={60} />
    </Tray>
  </TaskBar>
);

export default function App() {
  return (
    <Shell>
      <Global />
      <TitleRow />
      <MenuRow />
      <RibbonRow />
      <RulerRow />
      <Work />
      <Status />
      <Task />
      <Meter $top={148} $h={89} $w={15} $right={0} $on="linear-gradient(#6b6d75 0 45%, #c9c75a 45% 65%, #4fb59a 65%)" />
      <Meter $top={622} $h={85} $w={13} $right={3} $on="linear-gradient(#5f6165 0 84%, #39c25c 84%)" />
      <Pointer>
        <svg width="16" height="20" viewBox="0 0 16 20"><path d="M1 1v15l3.500-3 2.500 6 3-1.500L7.500 12H12z" fill="#fff" stroke="#000" strokeWidth="1.5" /></svg>
      </Pointer>
    </Shell>
  );
}
